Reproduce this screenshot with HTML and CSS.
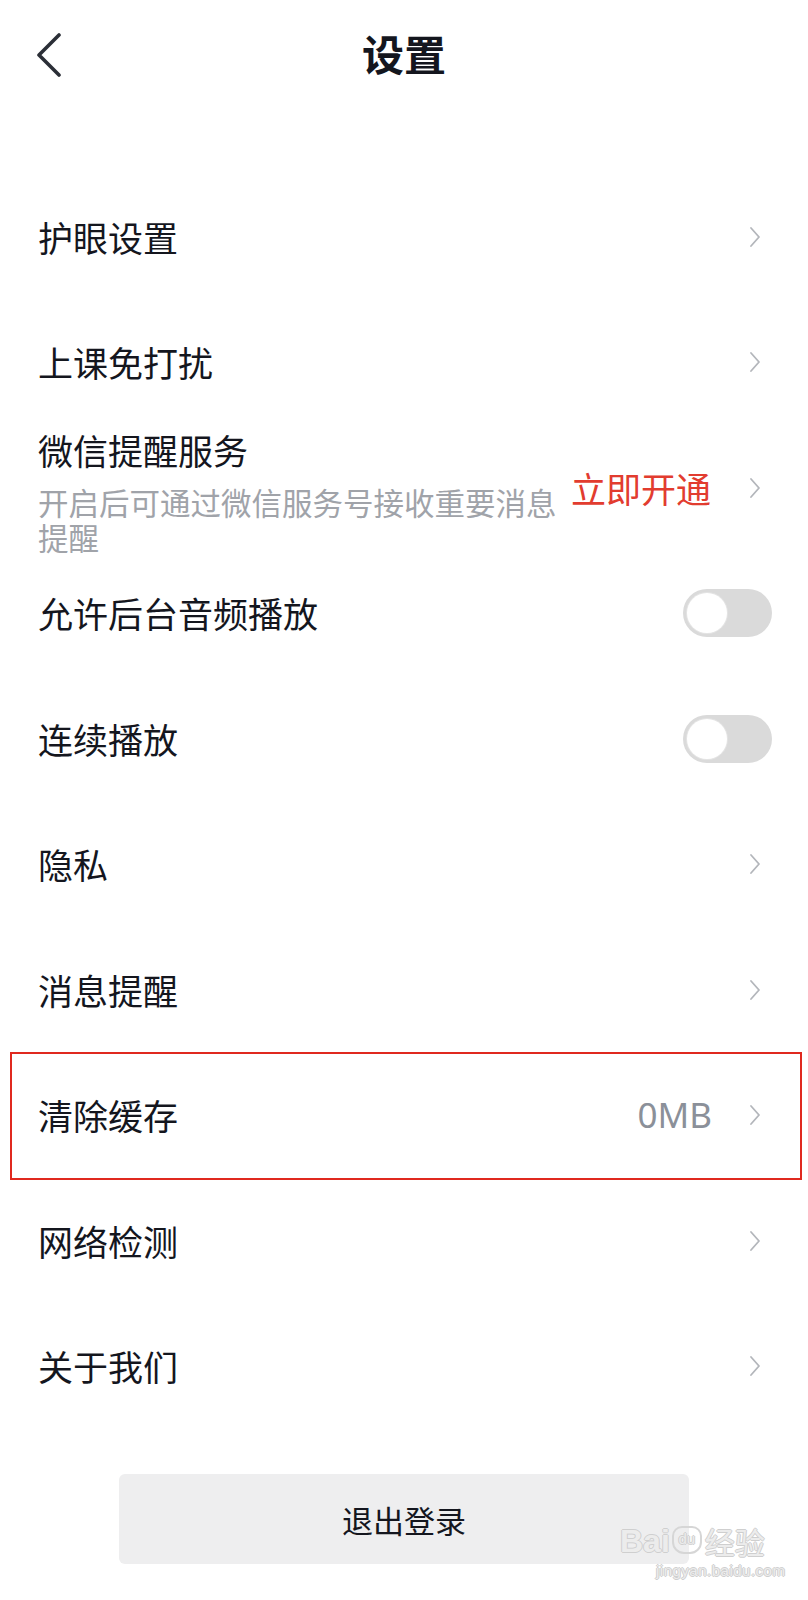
FILE: index.html
```html
<!DOCTYPE html>
<html lang="zh-CN">
<head>
    <meta charset="UTF-8">
    <meta name="viewport" content="width=device-width, initial-scale=1.0">
    <title>设置</title>
    <link rel="stylesheet" href="styles.css">
</head>
<body>

<!-- Üst bar -->
<header class="topbar">
    <a class="back" href="#">
        <svg width="26" height="44" viewBox="0 0 26 44"><path d="M23 2 L3 22 L23 42" fill="none" stroke="#2b2f37" stroke-width="3.6" stroke-linecap="round" stroke-linejoin="round"/></svg>
    </a>
    <h1>设置</h1>
    <span></span>
</header>

<!-- Ayarlar listesi -->
<ul class="settings">
    <li class="row">
        <span class="label">护眼设置</span>
        <svg class="arrow" width="12" height="22" viewBox="0 0 12 22"><path d="M2 2 L10 11 L2 20"/></svg>
    </li>
    <li class="row">
        <span class="label">上课免打扰</span>
        <svg class="arrow" width="12" height="22" viewBox="0 0 12 22"><path d="M2 2 L10 11 L2 20"/></svg>
    </li>
    <li class="row row-wechat">
        <div class="label-box">
            <div class="label">微信提醒服务</div>
            <div class="sub">开启后可通过微信服务号接收重要消息提醒</div>
        </div>
        <span class="value value-red">立即开通</span>
        <svg class="arrow" width="12" height="22" viewBox="0 0 12 22"><path d="M2 2 L10 11 L2 20"/></svg>
    </li>
    <li class="row">
        <span class="label">允许后台音频播放</span>
        <span class="switch"><span class="knob"></span></span>
    </li>
    <li class="row">
        <span class="label">连续播放</span>
        <span class="switch"><span class="knob"></span></span>
    </li>
    <li class="row">
        <span class="label">隐私</span>
        <svg class="arrow" width="12" height="22" viewBox="0 0 12 22"><path d="M2 2 L10 11 L2 20"/></svg>
    </li>
    <li class="row">
        <span class="label">消息提醒</span>
        <svg class="arrow" width="12" height="22" viewBox="0 0 12 22"><path d="M2 2 L10 11 L2 20"/></svg>
    </li>
    <li class="row marked">
        <span class="label">清除缓存</span>
        <span class="value">0MB</span>
        <svg class="arrow" width="12" height="22" viewBox="0 0 12 22"><path d="M2 2 L10 11 L2 20"/></svg>
    </li>
    <li class="row">
        <span class="label">网络检测</span>
        <svg class="arrow" width="12" height="22" viewBox="0 0 12 22"><path d="M2 2 L10 11 L2 20"/></svg>
    </li>
    <li class="row">
        <span class="label">关于我们</span>
        <svg class="arrow" width="12" height="22" viewBox="0 0 12 22"><path d="M2 2 L10 11 L2 20"/></svg>
    </li>
</ul>

<button class="logout">退出登录</button>

<!-- Filigran -->
<div class="watermark">
    <div class="wm-top">
        <span class="wm-bai">Bai</span>
        <span class="wm-paw">du</span>
        <span class="wm-cn">经验</span>
    </div>
    <div class="wm-url">jingyan.baidu.com</div>
</div>

</body>
</html>
```

FILE: styles.css
```css
body {
    margin: 0;
    padding: 0;
    background-color: #fff;
    color: #14161e;
    font-family: "Noto Sans CJK SC", "Noto Sans", sans-serif;
    position: relative;
    min-height: 1600px;
}

.topbar {
    height: 110px;
    display: grid;
    grid-template-columns: 1fr auto 1fr;
    align-items: center;
}
.back {
    display: flex;
    margin-left: 36px;
}
.topbar h1 {
    margin: 0;
    font-size: 42px;
    font-weight: 700;
    line-height: 50px;
    margin-top: -4px;
}

.settings {
    list-style: none;
    margin: 0;
    padding: 64px 0 0 0;
}
.row {
    height: 125.5px;
    display: flex;
    align-items: center;
    padding: 0 36px 0 38px;
    box-sizing: border-box;
    font-size: 35px;
    line-height: 44px;
    position: relative;
}
.label {
    flex: 1;
}
.value {
    color: #8b9099;
    font-family: "Noto Sans", "Noto Sans CJK SC", sans-serif;
    margin-right: 37px;
}
.value-red {
    color: #e23c2f;
    font-family: "Noto Sans CJK SC", sans-serif;
    margin-right: 38px;
}
.arrow {
    margin-right: 11px;
    flex-shrink: 0;
}
.arrow path {
    fill: none;
    stroke: #b3b6bb;
    stroke-width: 1.8;
    stroke-linecap: round;
    stroke-linejoin: round;
}

/* wechat row: two lines on the left */
.label-box {
    flex: 1;
    align-self: flex-start;
    margin-top: 3px;
}
.sub {
    font-size: 30.5px;
    line-height: 35px;
    color: #a0a3a9;
    margin-top: 12.5px;
}

.switch {
    width: 89px;
    height: 48px;
    border-radius: 24px;
    background-color: #dadada;
    display: flex;
    align-items: center;
    padding: 0 4px;
    box-sizing: border-box;
}
.knob {
    width: 40px;
    height: 40px;
    border-radius: 50%;
    background-color: #fff;
    box-shadow: 0 0 0 1px #e4e4e4;
}

/* red annotation frame */
.marked::after {
    content: "";
    position: absolute;
    top: -1px;
    left: 10px;
    right: 6px;
    bottom: -2px;
    border: 2.5px solid #e0291f;
}

.logout {
    display: block;
    width: 570px;
    height: 90px;
    margin: 45px auto 0;
    border: none;
    border-radius: 6px;
    background-color: #eeeeef;
    color: #14161e;
    font-family: "Noto Sans CJK SC", sans-serif;
    font-size: 31px;
}

.watermark {
    position: absolute;
    left: 620px;
    top: 1510px;
    color: #ececec;
    text-shadow: 1px 0 0 #cfcfcf, -1px 0 0 #cfcfcf, 0 1px 0 #cfcfcf, 0 -1px 0 #cfcfcf;
    font-family: "Liberation Sans", sans-serif;
}
.wm-top {
    display: flex;
    align-items: flex-end;
    height: 46px;
}
.wm-bai {
    font-size: 32px;
    font-weight: 700;
    line-height: 30px;
}
.wm-paw {
    width: 26px;
    height: 24px;
    border: 2px solid #d6d6d6;
    border-radius: 10px 10px 12px 12px;
    font-size: 15px;
    line-height: 22px;
    text-align: center;
    margin: 0 3px 2px 2px;
}
.wm-cn {
    font-family: "Noto Sans CJK SC", sans-serif;
    font-size: 30px;
    line-height: 30px;
}
.wm-url {
    font-size: 15px;
    margin: 6px 0 0 36px;
    letter-spacing: 0.5px;
}
```
